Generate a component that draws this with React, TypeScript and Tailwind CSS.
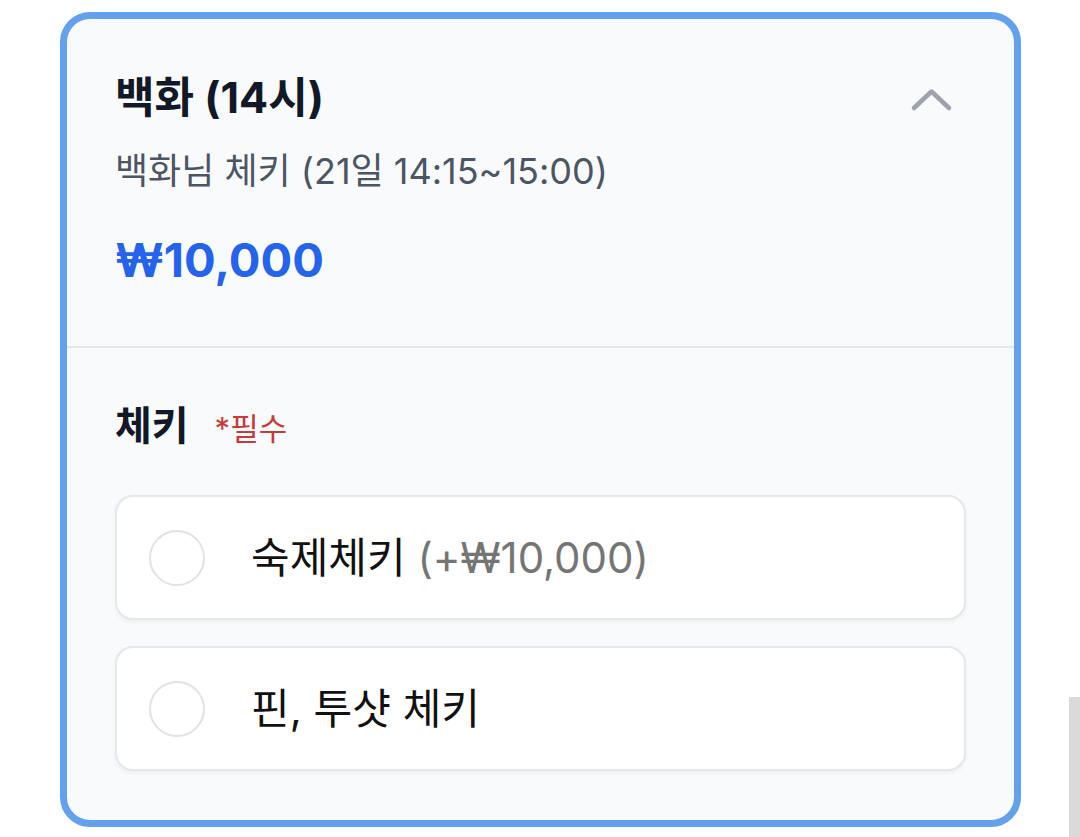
import { useState } from "react"

type Option = {
  id: string
  label: string
  extra?: string
}

const options: Option[] = [
  { id: "homework", label: "숙제체키", extra: "(+₩10,000)" },
  { id: "pin", label: "핀, 투샷 체키" },
]

const ChevronUp = () => (
  <svg width="48" height="32" viewBox="0 0 48 32" fill="none" aria-hidden="true">
    <path
      d="M6 24 L23.5 7.5 L41 24"
      stroke="#9ca3af"
      strokeWidth="4.5"
      strokeLinecap="round"
      strokeLinejoin="round"
    />
  </svg>
)

const App = () => {
  const [selected, setSelected] = useState<string | null>(null)

  return (
    <div
      className="relative min-h-screen w-full overflow-hidden bg-white pl-[60px] pt-[12px]"
      style={{ fontFamily: "Inter, 'Noto Sans CJK KR', sans-serif" }}
    >
      <div className="w-[961px] overflow-hidden rounded-[30px] border-[7px] border-[#63a1ee] bg-[#f9fafb]">
        {/* header */}
        <div className="flex items-start justify-between pl-[48px] pr-[58px] pt-[52px] pb-[58px]">
          <div className="flex flex-col">
            <h2 className="text-[43px] font-bold leading-[52px] text-[#111827]">백화 (14시)</h2>
            <p className="mt-[26px] text-[36px] leading-[45px] text-[#4b5563]">
              백화님 체키 (21일 14:15~15:00)
            </p>
            <p className="mt-[38px] text-[47px] font-bold leading-[56px] text-[#2563eb]">₩10,000</p>
          </div>
          <button className="mt-[13px]" aria-label="접기">
            <ChevronUp />
          </button>
        </div>

        <div className="h-[2px] bg-[#e5e7eb]" />

        {/* options */}
        <div className="px-[48px] pt-[54px] pb-[49px]">
          <div className="flex items-baseline gap-[26px]">
            <span className="text-[40px] font-semibold leading-[48px] text-[#111827]">체키</span>
            <span className="text-[31px] leading-[40px] text-[#c53a3a]">*필수</span>
          </div>

          <div className="mt-[45px] flex flex-col gap-[26px]">
            {options.map((opt) => (
              <button
                key={opt.id}
                onClick={() => setSelected(opt.id)}
                className="flex h-[125px] items-center gap-[46px] rounded-[18px] border-2 border-[#e5e7eb] bg-white pl-[32px] text-left shadow-[0_2px_4px_rgba(0,0,0,0.05)]"
              >
                <span className="flex h-[56px] w-[56px] shrink-0 items-center justify-center rounded-full border-2 border-[#e2e2e2] bg-white">
                  {selected === opt.id && <span className="h-[28px] w-[28px] rounded-full bg-[#2563eb]" />}
                </span>
                <span className="text-[42px] leading-[52px] text-[#111111]">
                  {opt.label}
                  {opt.extra && <span className="text-[#757575]"> {opt.extra}</span>}
                </span>
              </button>
            ))}
          </div>
        </div>
      </div>

      {/* scrollbar thumb */}
      <div className="absolute right-0 top-[697px] h-[140px] w-[11px] bg-[#dadada]" />
    </div>
  )
}

export default App
